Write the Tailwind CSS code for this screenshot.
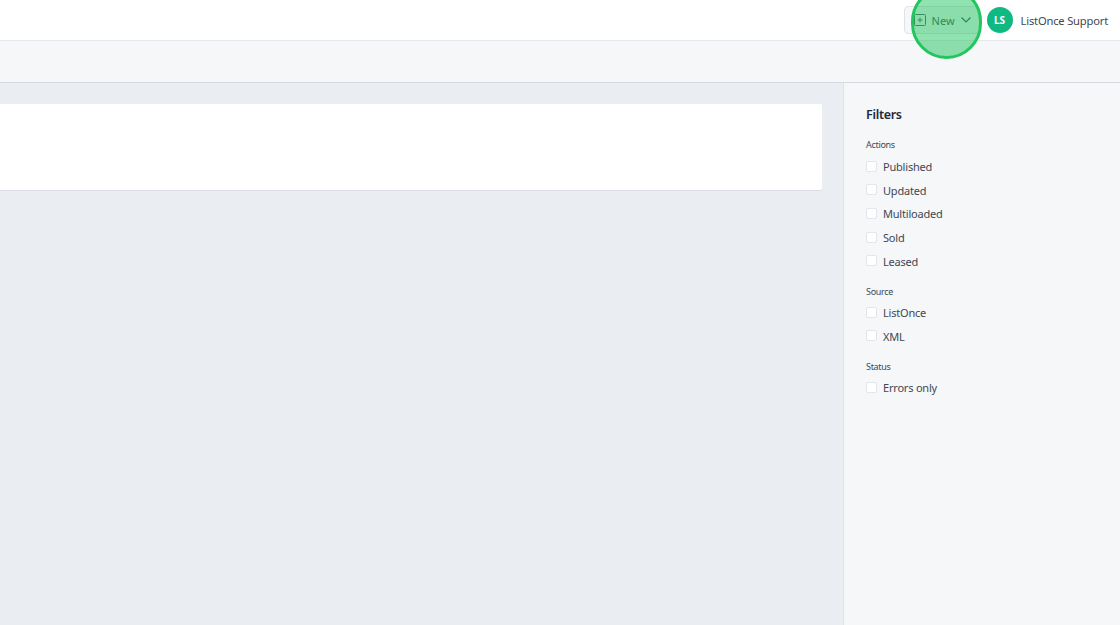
<!DOCTYPE html>
<html lang="en">
  <head>
    <meta charset="UTF-8" />
    <title>Activity</title>
    <script src="https://cdn.jsdelivr.net/npm/@tailwindcss/browser@4"></script>
  </head>
  <body class="font-['Noto_Sans',sans-serif] overflow-hidden">
    <div class="relative h-[625px] w-[1120px] flex flex-col bg-[#eaeef2] overflow-hidden">
      <!-- Top bar -->
      <div class="h-[41px] bg-white border-b border-[#e5e8ec] flex items-center justify-end pr-[12px] shrink-0">
        <button class="h-[28px] w-[76px] rounded border border-[#dfe3e8] bg-[#f5f7f9] flex items-center pl-[9px] text-[11px] text-[#3f4753]">
          <svg class="w-[12px] h-[12px] mr-[6px]" viewBox="0 0 12 12" fill="none" stroke="#4b5563" stroke-width="1">
            <rect x="0.5" y="0.5" width="11" height="11" rx="1" />
            <path d="M6 3.5v5M3.5 6h5" />
          </svg>
          <span class="mt-[2px]">New</span>
          <svg class="w-[10px] h-[6px] ml-[6px]" viewBox="0 0 10 6" fill="none" stroke="#374151" stroke-width="1.2">
            <path d="M0.5 0.5L5 5L9.5 0.5" />
          </svg>
        </button>
        <div class="ml-[7px] w-[26px] h-[26px] rounded-full bg-[#10b981] text-white text-[10px] font-bold flex items-center justify-center">LS</div>
        <span class="ml-[8px] mt-[3px] text-[11.2px] tracking-[-0.2px] text-[#3f4753]">ListOnce Support</span>
      </div>

      <!-- Sub header -->
      <div class="h-[42px] bg-[#f5f7f9] border-b border-[#d5dae1] shrink-0"></div>

      <!-- Body -->
      <div class="flex flex-1 min-h-0">
        <div class="flex-1 pt-[21px] pr-[21px]">
          <div class="h-[87px] bg-white border-b border-[#d9dde3] rounded-r-[2px]"></div>
        </div>
        <aside class="w-[277px] bg-[#f5f7f9] border-l border-[#dfe3e8] pl-[22px] pt-[23px] text-[#3f4753]">
          <h2 class="text-[12.5px] tracking-[-0.3px] leading-[18px] font-semibold text-[#1f2937]">Filters</h2>

          <p class="mt-[15px] text-[9px] tracking-[-0.3px] leading-[12px]">Actions</p>
          <div class="mt-[4.6px] flex flex-col">
            <label class="h-[23.6px] flex items-center text-[11px] tracking-[-0.2px]"><span class="w-[11px] h-[11px] mr-[6px] mt-[-2px] rounded-[2px] border border-[#e2e6ea] bg-white"></span>Published</label>
            <label class="h-[23.6px] flex items-center text-[11px] tracking-[-0.2px]"><span class="w-[11px] h-[11px] mr-[6px] mt-[-2px] rounded-[2px] border border-[#e2e6ea] bg-white"></span>Updated</label>
            <label class="h-[23.6px] flex items-center text-[11px] tracking-[-0.2px]"><span class="w-[11px] h-[11px] mr-[6px] mt-[-2px] rounded-[2px] border border-[#e2e6ea] bg-white"></span>Multiloaded</label>
            <label class="h-[23.6px] flex items-center text-[11px] tracking-[-0.2px]"><span class="w-[11px] h-[11px] mr-[6px] mt-[-2px] rounded-[2px] border border-[#e2e6ea] bg-white"></span>Sold</label>
            <label class="h-[23.6px] flex items-center text-[11px] tracking-[-0.2px]"><span class="w-[11px] h-[11px] mr-[6px] mt-[-2px] rounded-[2px] border border-[#e2e6ea] bg-white"></span>Leased</label>
          </div>

          <p class="mt-[12px] text-[9px] tracking-[-0.3px] leading-[12px]">Source</p>
          <div class="mt-[3.8px] flex flex-col">
            <label class="h-[23.6px] flex items-center text-[11px] tracking-[-0.2px]"><span class="w-[11px] h-[11px] mr-[6px] mt-[-2px] rounded-[2px] border border-[#e2e6ea] bg-white"></span>ListOnce</label>
            <label class="h-[23.6px] flex items-center text-[11px] tracking-[-0.2px]"><span class="w-[11px] h-[11px] mr-[6px] mt-[-2px] rounded-[2px] border border-[#e2e6ea] bg-white"></span>XML</label>
          </div>

          <p class="mt-[12px] text-[9px] tracking-[-0.3px] leading-[12px]">Status</p>
          <div class="mt-[3.8px] flex flex-col">
            <label class="h-[23.6px] flex items-center text-[11px] tracking-[-0.2px]"><span class="w-[11px] h-[11px] mr-[6px] mt-[-2px] rounded-[2px] border border-[#e2e6ea] bg-white"></span>Errors only</label>
          </div>
        </aside>
      </div>

      <!-- Click highlight -->
      <div class="absolute left-[911px] top-[-14px] w-[71px] h-[73px] rounded-full bg-[#22c55e]/50 border-[3px] border-[#22c55e]"></div>
    </div>
  </body>
</html>
